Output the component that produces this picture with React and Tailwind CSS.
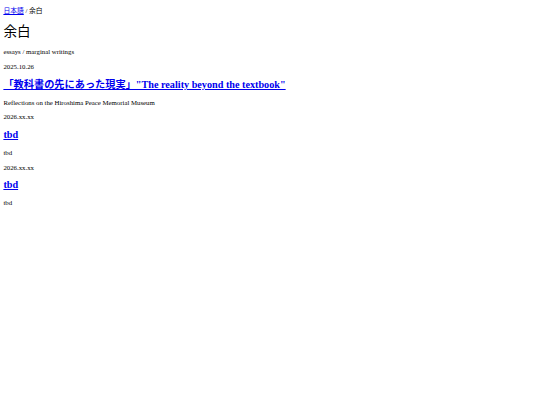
const POSTS = [
  {
    date: '2025.10.26',
    title: '「教科書の先にあった現実」"The reality beyond the textbook"',
    desc: 'Reflections on the Hiroshima Peace Memorial Museum',
  },
  { date: '2026.xx.xx', title: 'tbd', desc: 'tbd' },
  { date: '2026.xx.xx', title: 'tbd', desc: 'tbd' },
]

export default function App() {
  return (
    <div
      className="min-h-[405px] bg-white px-[3.4px] pt-[3.33px] text-black leading-[1.15]"
      style={{ fontFamily: '"Liberation Serif", "Noto Sans CJK JP", serif' }}
    >
      {/* Breadcrumb */}
      <nav className="mt-[3.8px] text-[6.8px]">
        <a href="#" className="text-[#0000ee] underline">日本語</a>
        <span> / 余白</span>
      </nav>

      <h1 className="mt-[9.3px] mb-[8.3px] text-[13.6px] font-normal">余白</h1>
      <p className="my-[7px] text-[6.8px]">essays / marginal writings</p>

      {POSTS.map((p, i) => (
        <article key={i}>
          <p className="my-[7px] text-[6.8px]">{p.date}</p>
          <h2 className="my-[8px] text-[10.2px] font-bold">
            <a href="#" className="text-[#0000ee] underline">{p.title}</a>
          </h2>
          <p className="my-[7px] text-[6.8px]">{p.desc}</p>
        </article>
      ))}
    </div>
  )
}
